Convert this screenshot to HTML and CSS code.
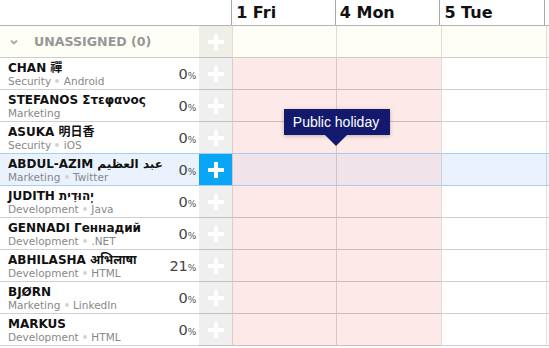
FILE: index.html
```html
<!DOCTYPE html>
<html>
<head>
<meta charset="utf-8">
<link rel="stylesheet" href="styles.css">
</head>
<body>
<div class="planner">
  <div class="head">
    <div class="head-side"></div>
    <div class="day-head d1">1 Fri</div>
    <div class="day-head d2">4 Mon</div>
    <div class="day-head d3">5 Tue</div>
    <div class="day-head d4"></div>
  </div>

  <div class="row row--group">
    <div class="person group-title">
      <svg class="chev" width="8" height="6" viewBox="0 0 8 6"><polyline points="1,1.5 4,4.5 7,1.5" fill="none" stroke="#aaa" stroke-width="1.8"/></svg>
      <span>UNASSIGNED (0)</span>
    </div>
    <div class="add"><span class="plus"></span></div>
    <div class="cell d1"></div><div class="cell d2"></div><div class="cell d3"></div><div class="cell d4"></div>
  </div>

  <div class="row">
    <div class="person"><div class="who"><div class="nm">CHAN 禪</div><div class="sub">Security <i class="dot"></i> Android</div></div><div class="pct">0<small>%</small></div></div>
    <div class="add"><span class="plus"></span></div>
    <div class="cell d1 holiday"></div><div class="cell d2 holiday"></div><div class="cell d3"></div><div class="cell d4"></div>
  </div>

  <div class="row">
    <div class="person"><div class="who"><div class="nm">STEFANOS Στεφανος</div><div class="sub">Marketing</div></div><div class="pct">0<small>%</small></div></div>
    <div class="add"><span class="plus"></span></div>
    <div class="cell d1 holiday"></div><div class="cell d2 holiday"></div><div class="cell d3"></div><div class="cell d4"></div>
  </div>

  <div class="row row--above-active">
    <div class="person"><div class="who"><div class="nm">ASUKA 明日香</div><div class="sub">Security <i class="dot"></i> iOS</div></div><div class="pct">0<small>%</small></div></div>
    <div class="add"><span class="plus"></span></div>
    <div class="cell d1 holiday"></div><div class="cell d2 holiday"></div><div class="cell d3"></div><div class="cell d4"></div>
  </div>

  <div class="row row--active">
    <div class="person"><div class="who"><div class="nm">ABDUL-AZIM <span dir="rtl">عبد العظيم</span></div><div class="sub">Marketing <i class="dot"></i> Twitter</div></div><div class="pct">0<small>%</small></div></div>
    <div class="add"><span class="plus"></span></div>
    <div class="cell d1 holiday"></div><div class="cell d2 holiday"></div><div class="cell d3"></div><div class="cell d4"></div>
  </div>

  <div class="row">
    <div class="person"><div class="who"><div class="nm">JUDITH <span dir="rtl">יְהוּדִית</span></div><div class="sub">Development <i class="dot"></i> Java</div></div><div class="pct">0<small>%</small></div></div>
    <div class="add"><span class="plus"></span></div>
    <div class="cell d1 holiday"></div><div class="cell d2 holiday"></div><div class="cell d3"></div><div class="cell d4"></div>
  </div>

  <div class="row">
    <div class="person"><div class="who"><div class="nm">GENNADI Геннадий</div><div class="sub">Development <i class="dot"></i> .NET</div></div><div class="pct">0<small>%</small></div></div>
    <div class="add"><span class="plus"></span></div>
    <div class="cell d1 holiday"></div><div class="cell d2 holiday"></div><div class="cell d3"></div><div class="cell d4"></div>
  </div>

  <div class="row">
    <div class="person"><div class="who"><div class="nm">ABHILASHA अभिलाषा</div><div class="sub">Development <i class="dot"></i> HTML</div></div><div class="pct">21<small>%</small></div></div>
    <div class="add"><span class="plus"></span></div>
    <div class="cell d1 holiday"></div><div class="cell d2 holiday"></div><div class="cell d3"></div><div class="cell d4"></div>
  </div>

  <div class="row">
    <div class="person"><div class="who"><div class="nm">BJØRN</div><div class="sub">Marketing <i class="dot"></i> LinkedIn</div></div><div class="pct">0<small>%</small></div></div>
    <div class="add"><span class="plus"></span></div>
    <div class="cell d1 holiday"></div><div class="cell d2 holiday"></div><div class="cell d3"></div><div class="cell d4"></div>
  </div>

  <div class="row">
    <div class="person"><div class="who"><div class="nm">MARKUS</div><div class="sub">Development <i class="dot"></i> HTML</div></div><div class="pct">0<small>%</small></div></div>
    <div class="add"><span class="plus"></span></div>
    <div class="cell d1 holiday"></div><div class="cell d2 holiday"></div><div class="cell d3"></div><div class="cell d4"></div>
  </div>

  <div class="tooltip">Public holiday</div>
</div>
</body>
</html>
```

FILE: styles.css
```css
* { box-sizing: border-box; }
html, body { margin: 0; padding: 0; background: #fff; }
body {
  font-family: "DejaVu Sans", "Noto Sans", "Noto Sans CJK JP", sans-serif;
  color: #111;
  overflow: hidden;
}
.planner { position: relative; width: 549px; }

.head { display: flex; height: 26px; border-bottom: 1px solid #b4b4b4; }
.head-side { width: 232px; }
.day-head {
  font-weight: bold;
  font-size: 16px;
  line-height: 25px;
  padding-left: 4px;
  border-left: 1px solid #a8a8a8;
  white-space: nowrap;
  overflow: hidden;
}
.d1 { width: 104px; }
.d2 { width: 105px; }
.d3 { width: 105px; }
.d4 { flex: 1; }

.row { display: flex; height: 32px; }
.row > * { border-bottom: 1px solid rgba(0, 0, 0, 0.19); }

.person {
  width: 199px;
  display: flex;
  justify-content: space-between;
  align-items: flex-start;
  padding: 4px 3px 0 8px;
}
.nm {
  font-weight: bold;
  font-size: 12px;
  line-height: 13px;
  white-space: nowrap;
  color: #111;
}
.sub {
  font-size: 10.5px;
  line-height: 12px;
  color: #888;
  white-space: nowrap;
}
.dot {
  display: inline-block;
  width: 4px;
  height: 4px;
  border-radius: 50%;
  background: #d4d4d4;
  vertical-align: 2px;
  margin: 0 1px;
}
.pct {
  align-self: center;
  margin-top: -3px;
  font-size: 14.5px;
  color: #444;
  letter-spacing: -0.2px;
}
.pct small { font-size: 9px; color: #555; }

.add {
  width: 33px;
  background: #efefef;
  display: flex;
  align-items: center;
  justify-content: center;
}
.plus { position: relative; width: 16px; height: 16px; display: block; }
.plus::before, .plus::after { content: ""; position: absolute; background: #fff; }
.plus::before { left: 0; right: 0; top: 6px; height: 4px; }
.plus::after { top: 0; bottom: 0; left: 6px; width: 4px; }

.cell { border-left: 1px solid rgba(0, 0, 0, 0.13); }
.cell.holiday { background: #fdeae8; border-left-color: rgba(80, 0, 0, 0.16); }
.cell.d1 { border-left-color: rgba(80, 0, 0, 0.14); }

.row--group { background: #fefef7; }
.row--group .add { background: #efefe8; }
.group-title {
  align-items: center;
  padding: 0 0 0 10px;
  font-weight: bold;
  font-size: 12.6px;
  color: #979797;
  justify-content: flex-start;
}
.chev { margin-right: 16px; margin-top: 1px; }

.row--above-active > * { border-bottom-color: #a6cdf2; }
.row--active { background: #eaf3fd; }
.row--active > * { border-bottom-color: #a6cdf2; }
.row--active .add { background: #0aa6f6; }
.row--active .cell.holiday { background: #f0e4ea; }

.tooltip {
  position: absolute;
  left: 284px;
  top: 109px;
  width: 106px;
  height: 26px;
  background: #131a6e;
  color: #fff;
  font-family: "Liberation Sans", Arial, sans-serif;
  font-size: 14px;
  line-height: 26px;
  text-align: center;
  padding-right: 2px;
  box-shadow: 0 1px 4px rgba(0, 0, 0, 0.25);
}
.tooltip::after {
  content: "";
  position: absolute;
  left: 41px;
  top: 26px;
  border-left: 11px solid transparent;
  border-right: 11px solid transparent;
  border-top: 11px solid #131a6e;
}
```
